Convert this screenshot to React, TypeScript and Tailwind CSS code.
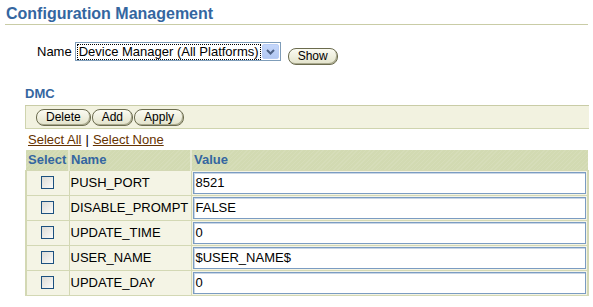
import React from "react";

const font = { fontFamily: '"Liberation Sans", Arial, sans-serif' };

function Btn({ label }: { label: string }) {
  return (
    <button
      className="h-[17px] px-[9px] rounded-[8px] border border-[#6b6b4e] bg-gradient-to-b from-[#fbfbf2] to-[#e3e3cb] text-[12px] leading-[15px] text-black shadow-[inset_-1px_-1px_0_#a9a98e]"
    >
      {label}
    </button>
  );
}

function Check() {
  return (
    <div className="w-[13px] h-[13px] border border-[#1c5180] bg-gradient-to-br from-[#dcdcd6] to-[#fbfbf9]" />
  );
}

const rows = [
  ["PUSH_PORT", "8521"],
  ["DISABLE_PROMPT", "FALSE"],
  ["UPDATE_TIME", "0"],
  ["USER_NAME", "$USER_NAME$"],
  ["UPDATE_DAY", "0"],
];

const hatch = {
  backgroundColor: "#d2dab2",
  backgroundImage:
    "repeating-linear-gradient(135deg, rgba(255,255,255,0.09) 0px, rgba(255,255,255,0.09) 1px, transparent 1px, transparent 3px)",
};

export default function App() {
  return (
    <div className="w-[593px] h-[307px] bg-white overflow-hidden text-black" style={font}>
      <div className="mx-[5px] pt-[4px] border-b border-[#c9cca6]">
        <h1 className="pl-[1px] text-[16px] leading-[20px] font-bold text-[#3466a0]">
          Configuration Management
        </h1>
      </div>

      <div className="flex items-start pl-[37px] mt-[17px]">
        <span className="text-[13px] leading-[18px] mt-[1px] mr-[3px]">Name</span>
        <div className="flex h-[19px] w-[206px] border border-[#7f9db9] bg-white">
          <div className="flex-1 flex items-center pl-[1px] overflow-hidden">
            <span className="border border-dotted border-black px-[1px] text-[13px] leading-[14px] whitespace-nowrap">
              Device Manager (All Platforms)
            </span>
          </div>
          <div className="w-[17px] shrink-0 m-[1px] rounded-[2px] bg-gradient-to-b from-[#c5d7fb] to-[#b2c8f2] border border-[#b9cdf5] flex items-center justify-center">
            <svg width="9" height="6" viewBox="0 0 9 6">
              <path d="M1 1 L4.5 4.5 L8 1" stroke="#4d6185" strokeWidth="2" fill="none" />
            </svg>
          </div>
        </div>
        <div className="flex ml-[7px] mt-[6px]">
          <Btn label="Show" />
        </div>
      </div>

      <div className="ml-[25px] mr-[4px] mt-[21px]">
        <h2 className="text-[13px] leading-[15px] font-bold text-[#3466a0] pb-[4px] border-b border-[#c9cca6]">
          DMC
        </h2>
        <div className="flex gap-[1px] items-center h-[23px] pl-[10px] bg-[#f2f2e0] border-l border-b border-[#cfd4ae]">
          <Btn label="Delete" />
          <Btn label="Add" />
          <Btn label="Apply" />
        </div>
        <div className="h-[21px] pl-[3px] flex items-center text-[13px]">
          <a className="underline text-[#663300]">Select All</a>
          <span className="mx-[4px]">|</span>
          <a className="underline text-[#663300]">Select None</a>
        </div>
        <table className="w-full border-collapse">
          <thead>
            <tr style={hatch} className="h-[20px]">
              <th className="w-[43px] text-left pl-[2px] text-[13px] font-bold text-[#3466a0] border-r-2 border-[#e6e9d2]">
                Select
              </th>
              <th className="w-[122px] text-left pl-[1px] text-[13px] font-bold text-[#3466a0] border-r-2 border-[#e6e9d2]">
                Name
              </th>
              <th className="text-left pl-[2px] text-[13px] font-bold text-[#3466a0]">Value</th>
            </tr>
          </thead>
          <tbody>
            {rows.map(([n, v]) => (
              <tr key={n} className="h-[25px] bg-[#f4f4e5]">
                <td className="border border-[#d3d8b4] border-l-2">
                  <div className="flex justify-center">
                    <Check />
                  </div>
                </td>
                <td className="border border-[#d3d8b4] pl-[1px] text-[13px]">{n}</td>
                <td className="border border-[#d3d8b4] border-r-2 px-[1px]">
                  <div className="h-[22px] border border-[#7b9cc2] bg-white flex items-center pl-[2px] text-[13px] shadow-[inset_1px_1px_0_#c9d6e6]">
                    {v}
                  </div>
                </td>
              </tr>
            ))}
          </tbody>
        </table>
      </div>
    </div>
  );
}
